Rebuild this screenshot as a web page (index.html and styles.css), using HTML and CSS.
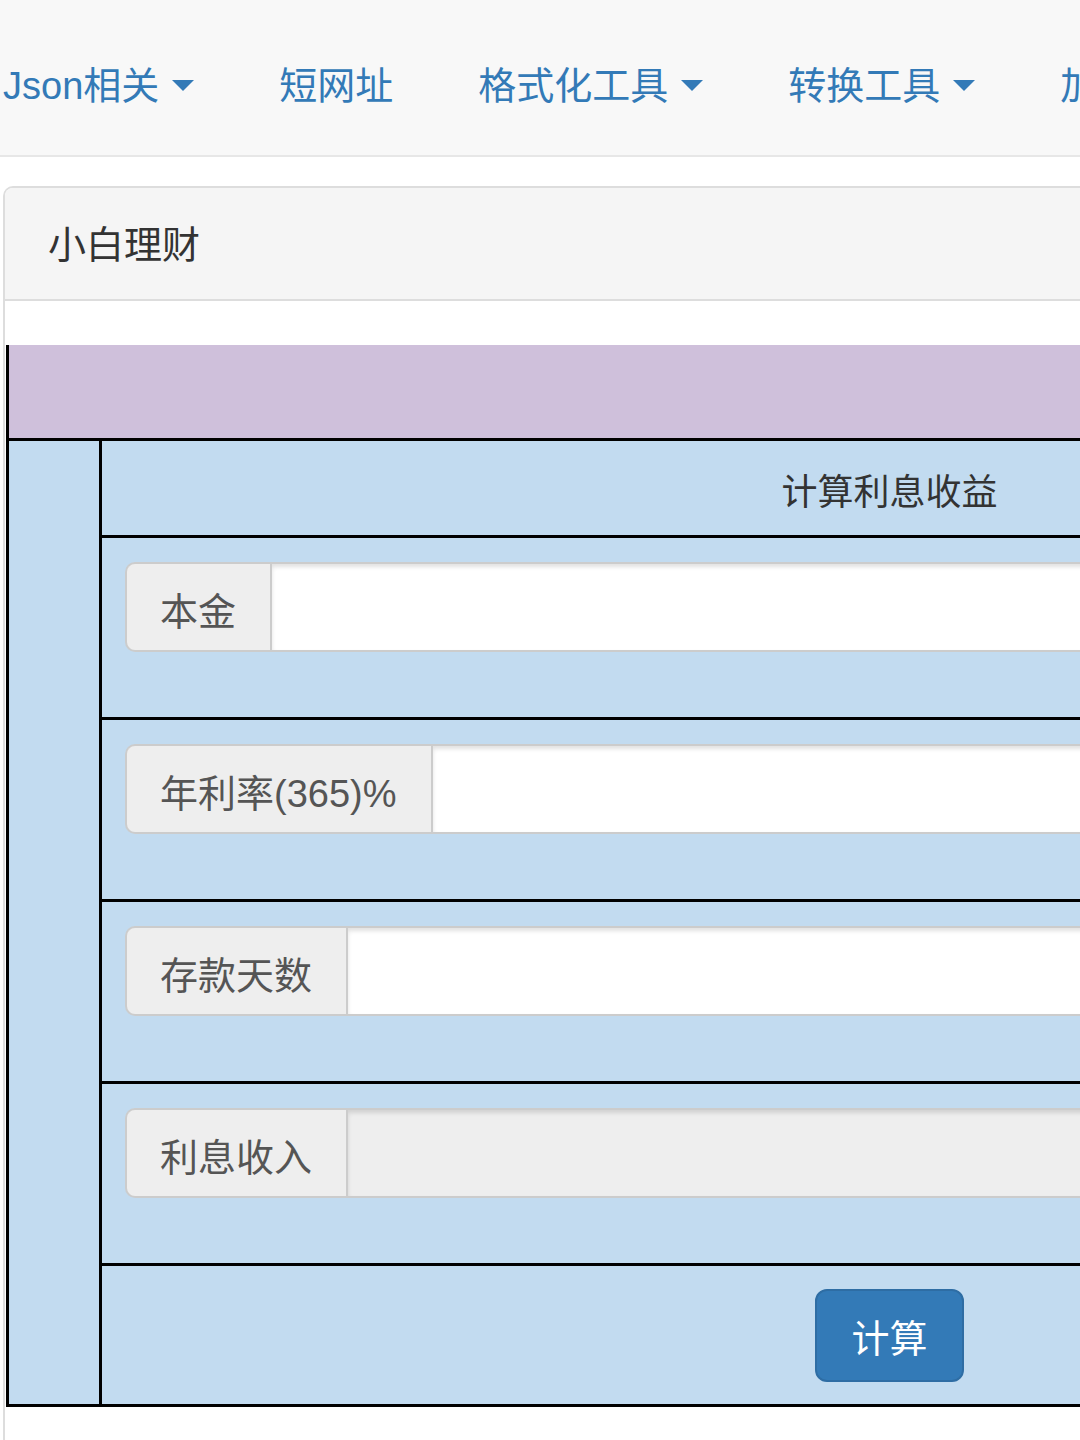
FILE: index.html
```html
<!doctype html>
<html>
<head>
    <meta charset="UTF-8">
    <title>小白理财</title>
    <link rel="stylesheet" href="styles.css">
</head>
<body>
<nav class="navbar">
    <ul class="nav">
        <li><a href="#">Json相关<span class="caret"></span></a></li>
        <li><a href="#">短网址</a></li>
        <li><a href="#">格式化工具<span class="caret"></span></a></li>
        <li><a href="#">转换工具<span class="caret"></span></a></li>
        <li><a href="#">加解密<span class="caret"></span></a></li>
    </ul>
</nav>
<div class="panel">
    <div class="panel-heading">
        <h3 class="panel-title">小白理财</h3>
    </div>
    <div class="panel-body">
        <table class="calc">
            <tr class="head-row">
                <td colspan="2"></td>
            </tr>
            <tr>
                <td class="side" rowspan="6"></td>
                <td class="title-cell">计算利息收益</td>
            </tr>
            <tr>
                <td class="field-cell">
                    <div class="input-group">
                        <span class="addon">本金</span>
                        <input class="form-control" type="text">
                    </div>
                </td>
            </tr>
            <tr>
                <td class="field-cell">
                    <div class="input-group">
                        <span class="addon">年利率(365)%</span>
                        <input class="form-control" type="text">
                    </div>
                </td>
            </tr>
            <tr>
                <td class="field-cell">
                    <div class="input-group">
                        <span class="addon">存款天数</span>
                        <input class="form-control" type="text">
                    </div>
                </td>
            </tr>
            <tr>
                <td class="field-cell">
                    <div class="input-group">
                        <span class="addon">利息收入</span>
                        <input class="form-control" type="text" disabled>
                    </div>
                </td>
            </tr>
            <tr>
                <td class="btn-cell"><button class="btn">计算</button></td>
            </tr>
        </table>
    </div>
</div>
</body>
</html>
```
FILE: styles.css
```css
* {
    margin: 0;
    padding: 0;
    box-sizing: border-box;
}

html, body {
    overflow: hidden;
}

body {
    width: 1080px;
    font-family: "Liberation Sans", "Noto Sans CJK SC", sans-serif;
    font-size: 38px;
    color: #333;
    background-color: #fff;
}

.navbar {
    height: 157px;
    background-color: #f8f8f8;
    border-bottom: 2px solid #e7e7e7;
}

.navbar .nav {
    display: flex;
    align-items: center;
    gap: 85px;
    height: 155px;
    padding: 16px 0 0 3px;
    list-style: none;
    white-space: nowrap;
}

.navbar .nav a {
    display: flex;
    align-items: center;
    color: #337ab7;
    text-decoration: none;
    line-height: 44px;
}

.navbar .caret {
    display: inline-block;
    width: 0;
    height: 0;
    margin-left: 13px;
    border-top: 11px solid #337ab7;
    border-left: 11px solid transparent;
    border-right: 11px solid transparent;
}

.panel {
    width: 1690px;
    margin: 29px 0 0 3px;
    border: 2px solid #ddd;
    border-bottom: none;
    border-radius: 10px 10px 0 0;
}

.panel .panel-heading {
    height: 113px;
    padding: 0 0 4px 43px;
    background-color: #f5f5f5;
    border-bottom: 2px solid #ddd;
    border-radius: 8px 8px 0 0;
    display: flex;
    align-items: center;
}

.panel .panel-title {
    font-size: 38px;
    font-weight: normal;
    color: #333;
}

.panel .panel-body {
    padding: 44px 0 60px 1px;
}

.calc {
    width: 1671px;
    border-collapse: separate;
    border-spacing: 0;
    border-left: 3px solid #000;
    background-color: #c2dbf0;
}

.calc td {
    padding: 0;
    border-bottom: 3px solid #000;
}

.calc .head-row td {
    height: 96px;
    background-color: #cfc0db;
}

.calc .side {
    width: 93px;
    border-right: 3px solid #000;
}

.calc .title-cell {
    height: 97px;
    text-align: center;
    font-size: 36px;
    color: #333;
    padding-top: 2px;
}

.calc .field-cell {
    height: 182px;
    vertical-align: top;
    padding: 24px 23px 0;
}

.input-group {
    display: flex;
    height: 90px;
}

.input-group .addon {
    display: flex;
    align-items: center;
    padding: 2px 34px 0 33px;
    background-color: #eee;
    border: 2px solid #ccc;
    border-right: none;
    border-radius: 10px 0 0 10px;
    color: #555;
    font-size: 38px;
    white-space: nowrap;
}

.input-group .form-control {
    flex: 1;
    height: 90px;
    border: 2px solid #ccc;
    border-radius: 0 10px 10px 0;
    background-color: #fff;
    box-shadow: inset 0 3px 4px rgba(0, 0, 0, .12);
    font-size: 38px;
    outline: none;
}

.input-group .form-control:disabled {
    background-color: #eee;
}

.calc .btn-cell {
    height: 141px;
    text-align: center;
    vertical-align: middle;
}

.btn {
    width: 149px;
    height: 93px;
    background-color: #337ab7;
    border: 2px solid #2e6da4;
    border-radius: 12px;
    color: #fff;
    font-family: "Liberation Sans", "Noto Sans CJK SC", sans-serif;
    font-size: 38px;
    cursor: pointer;
}
```
